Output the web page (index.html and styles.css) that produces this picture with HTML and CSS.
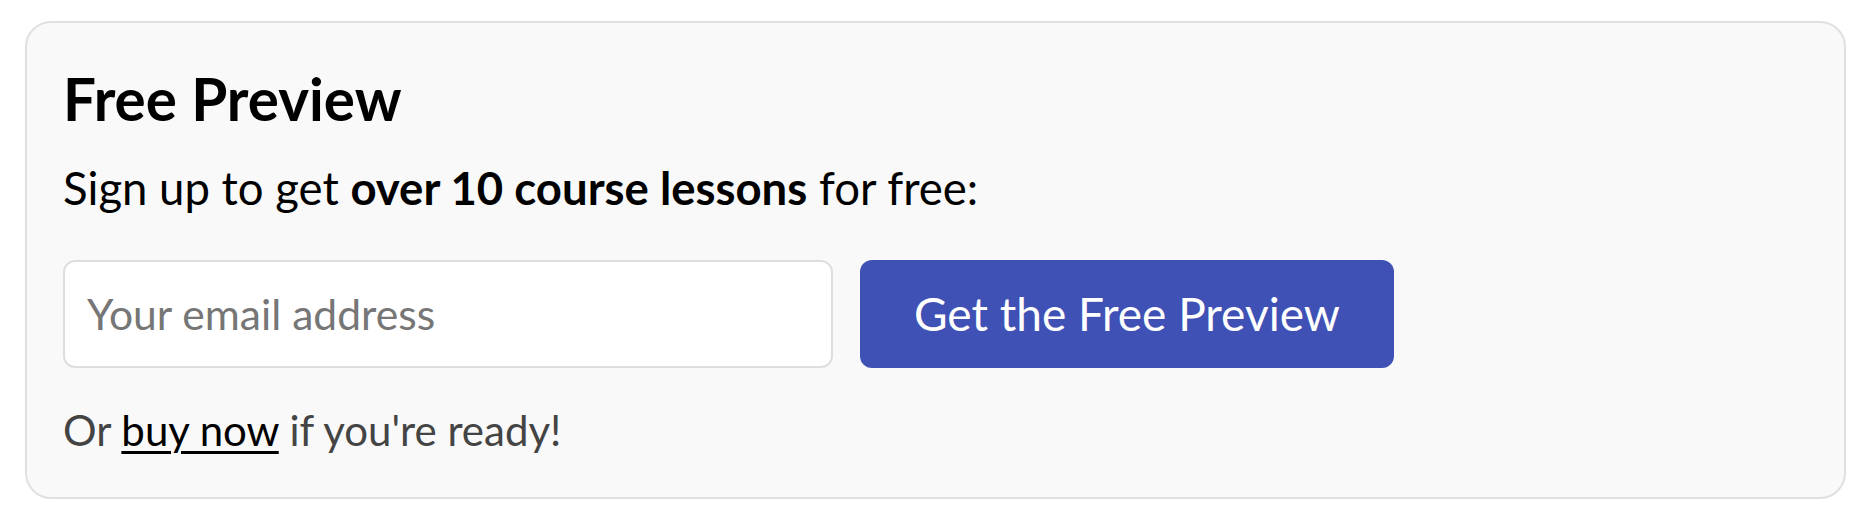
FILE: index.html
```html
<!DOCTYPE html>
<html lang="en">
<head>
    <meta charset="UTF-8">
    <meta name="viewport" content="width=device-width, initial-scale=1.0">
    <title>Free Preview</title>
    <link rel="stylesheet" href="styles.css">
</head>
<body>

    <div class="preview-card">
        <h2>Free Preview</h2>
        <p class="lead">Sign up to get <strong>over 10 course lessons</strong> for free:</p>

        <form class="signup-form" onsubmit="return false;">
            <input type="email" class="email-input" placeholder="Your email address">
            <button type="submit" class="preview-btn">Get the Free Preview</button>
        </form>

        <p class="buy-line">Or <a href="#">buy now</a> if you're ready!</p>
    </div>

</body>
</html>
```

FILE: styles.css
```css
body {
    margin: 0;
    background-color: #fff;
    font-family: 'Lato', 'Liberation Sans', sans-serif;
    color: #000;
}

.preview-card {
    margin: 21px 22px 0 25px;
    padding: 40px 36px 42px 36px;
    background-color: #f9f9f9;
    border: 2px solid #e0e0e0;
    border-radius: 26px;
}

.preview-card h2 {
    margin: 0;
    font-size: 58.4px;
    font-weight: bold;
    line-height: 1.2;
}

.lead {
    margin: 28px 0 0 0;
    font-size: 45.5px;
    line-height: 1.2;
}

.lead strong {
    font-weight: bold;
}

.signup-form {
    display: flex;
    align-items: stretch;
    gap: 27px;
    margin-top: 44px;
}

.email-input {
    width: 770px;
    height: 108px;
    box-sizing: border-box;
    padding: 0 22px;
    border: 2px solid #dedede;
    border-radius: 12px;
    background-color: #fff;
    font-family: 'Lato', 'Liberation Sans', sans-serif;
    font-size: 42.6px;
    color: #000;
}

.email-input::placeholder {
    color: #767676;
}

.preview-btn {
    height: 108px;
    padding: 0 54px;
    border: none;
    border-radius: 12px;
    background-color: #3f51b5;
    color: #fff;
    font-family: 'Lato', 'Liberation Sans', sans-serif;
    font-size: 46px;
    cursor: pointer;
}

.buy-line {
    margin: 37px 0 0 0;
    font-size: 42px;
    line-height: 1.2;
    color: #444;
}

.buy-line a {
    color: #000;
    text-decoration: underline;
    text-decoration-thickness: 3px;
    text-underline-offset: 5px;
}
```
